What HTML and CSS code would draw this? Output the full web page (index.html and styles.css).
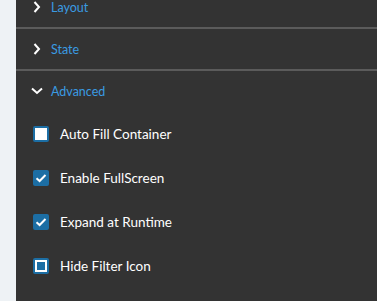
FILE: index.html
```html
<!DOCTYPE html>
<html lang="en">
<head>
  <meta charset="UTF-8">
  <title>Properties</title>
  <link rel="stylesheet" href="styles.css">
</head>
<body>
  <div class="side-strip"></div>
  <div class="panel">
    <!-- Collapsed sections -->
    <div class="section-head collapsed first">
      <svg class="chev" viewBox="0 0 12 12"><path d="M3.5 1 L8 6 L3.5 11" /></svg>
      <span>Layout</span>
    </div>
    <div class="section-head collapsed">
      <svg class="chev" viewBox="0 0 12 12"><path d="M3.5 1 L8 6 L3.5 11" /></svg>
      <span>State</span>
    </div>
    <!-- Expanded section -->
    <div class="section-head open">
      <svg class="chev" viewBox="0 0 12 12"><path d="M1 3.5 L6 8 L11 3.5" /></svg>
      <span>Advanced</span>
    </div>
    <div class="section-body">
      <label class="check-row">
        <span class="box"></span>
        <span class="check-label">Auto Fill Container</span>
      </label>
      <label class="check-row">
        <span class="box checked">
          <svg viewBox="0 0 16 16"><path d="M3.5 8.2 L6.6 11 L12.5 5" /></svg>
        </span>
        <span class="check-label">Enable FullScreen</span>
      </label>
      <label class="check-row">
        <span class="box checked">
          <svg viewBox="0 0 16 16"><path d="M3.5 8.2 L6.6 11 L12.5 5" /></svg>
        </span>
        <span class="check-label">Expand at Runtime</span>
      </label>
      <label class="check-row">
        <span class="box focused"></span>
        <span class="check-label">Hide Filter Icon</span>
      </label>
    </div>
  </div>
</body>
</html>
```
FILE: styles.css
```css
html, body {
  height: 100%;
  margin: 0;
  padding: 0;
}
body {
  display: flex;
  background: #eef2f5;
  font-family: Lato, 'Open Sans', Arial, sans-serif;
  overflow: hidden;
}
.side-strip {
  width: 16px;
  flex: none;
}
.panel {
  flex: 1;
  background: #333333;
}
.section-head {
  height: 40px;
  display: flex;
  align-items: center;
  padding-left: 15px;
  color: #3a9be2;
  font-size: 12.5px;
}
.section-head.collapsed {
  border-bottom: 2px solid #5b5b5b;
}
.section-head.first {
  margin-top: -13px;
}
.chev {
  width: 12px;
  height: 12px;
  margin-right: 8px;
  fill: none;
  stroke: #fff;
  stroke-width: 2;
}
.section-body {
  display: flex;
  flex-direction: column;
  gap: 28px;
  padding: 15px 0 0 17px;
}
.check-row {
  display: flex;
  align-items: center;
  gap: 11px;
  color: #fff;
  font-size: 13.5px;
}
.box {
  width: 16px;
  height: 16px;
  box-sizing: border-box;
  border: 2px solid #1c6ea4;
  border-radius: 2px;
  background: #fff;
  display: flex;
}
.box svg {
  width: 100%;
  height: 100%;
  fill: none;
  stroke: #fff;
  stroke-width: 2;
}
.box.checked {
  background: #1c6ea4;
  border: none;
}
.box.focused {
  border: 2px solid #1c6ea4;
  background: #1c6ea4;
  box-shadow: inset 0 0 0 2px #fff;
}
```
